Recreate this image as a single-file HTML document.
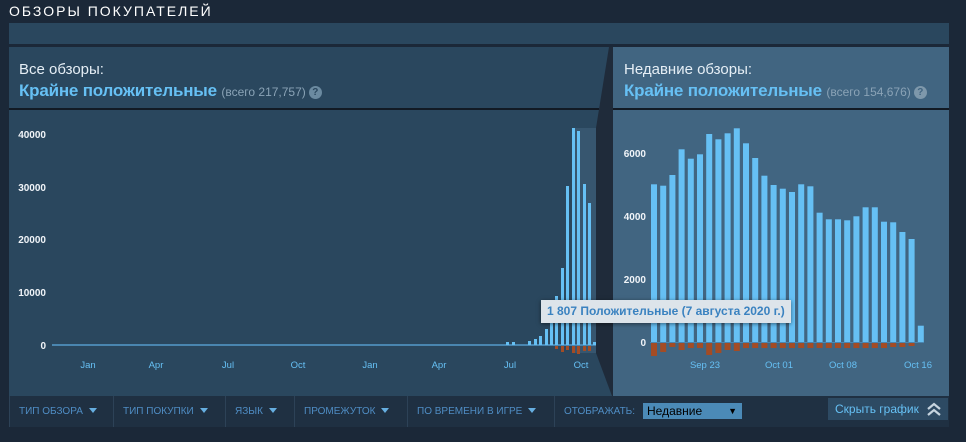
<!DOCTYPE html>
<html><head><meta charset="utf-8"><style>
*{margin:0;padding:0;box-sizing:border-box}
body{width:966px;height:442px;background:#1b2838;font-family:"Liberation Sans",Arial,sans-serif;position:relative;overflow:hidden}
.abs{position:absolute}
.title{left:9px;top:3px;color:#fff;font-size:14px;letter-spacing:2px}
.strip{left:9px;top:23px;width:940px;height:21px;background:#2a475e}
.lp{left:9px;top:47px;width:603px;height:349px;background:#2a475e}
.rp{left:613px;top:47px;width:336px;height:349px;background:#416581}
.lab{color:#e5eef5;font-size:15px}
.rat{color:#66c0f4;font-size:17px;font-weight:bold;letter-spacing:-0.2px}
.cnt{color:#8aa3b6;font-size:12px;font-weight:normal;letter-spacing:0}
.q{display:inline-block;width:13px;height:13px;border-radius:50%;background:#6b8aa0;color:#2a475e;font-size:10px;font-weight:bold;text-align:center;line-height:13px;vertical-align:1px;margin-left:3px;letter-spacing:0}
.sep{height:2px;background:#121a24}
.bar{left:9px;top:396px;width:940px;height:31px;background:#1f3042}
.f{position:absolute;top:0;height:31px;line-height:31px;color:#4f8dc4;font-size:10px;border-left:1px solid #2d4257;padding-left:9px}
.tri{display:inline-block;width:0;height:0;border-left:4px solid transparent;border-right:4px solid transparent;border-top:5px solid #66aee0;margin-left:6px;vertical-align:1px}
</style></head><body>
<div class="abs title">ОБЗОРЫ ПОКУПАТЕЛЕЙ</div>
<div class="abs strip"></div>
<div class="abs lp"></div>
<div class="abs rp"></div>
<div class="abs sep" style="left:9px;top:108px;width:590px"></div>
<div class="abs sep" style="left:613px;top:108px;width:336px"></div>
<div class="abs lab" style="left:19px;top:61px">Все обзоры:</div>
<div class="abs rat" style="left:19px;top:81px">Крайне положительные <span class="cnt">(всего 217,757)</span><span class="q">?</span></div>
<div class="abs lab" style="left:624px;top:61px">Недавние обзоры:</div>
<div class="abs rat" style="left:624px;top:81px">Крайне положительные <span class="cnt">(всего 154,676)</span><span class="q" style="background:#7e98ab;color:#416581">?</span></div>
<svg class="abs" style="left:0;top:0" width="966" height="442">
<rect x="575" y="128" width="21" height="225" fill="#37566f"/>
<polygon points="609,47 613,47 613,396 612,396 596,353 596,128" fill="#1f2b3a"/>
<g font-size="10" font-weight="bold" fill="#f0f4f8" text-anchor="end">
<text x="46" y="138">40000</text><text x="46" y="191">30000</text><text x="46" y="243">20000</text><text x="46" y="296">10000</text><text x="46" y="349">0</text>
<text x="646" y="157">6000</text><text x="646" y="220">4000</text><text x="646" y="283">2000</text><text x="646" y="346">0</text>
</g>
<line x1="52" y1="345" x2="596" y2="345" stroke="#4a86b0" stroke-width="2"/>
<g fill="#66c0f4">
<rect x="506" y="342" width="3" height="3"/><rect x="512" y="342" width="3" height="3"/><rect x="528" y="341" width="3" height="4"/><rect x="534" y="339" width="3" height="6"/>
<rect x="539" y="336" width="3" height="9"/><rect x="545" y="329" width="3" height="16"/><rect x="550" y="323" width="3" height="22"/><rect x="555" y="296" width="3" height="49"/><rect x="561" y="268" width="3" height="77"/><rect x="566" y="186" width="3" height="159"/><rect x="572" y="128" width="3" height="217"/><rect x="577" y="131" width="3" height="214"/><rect x="583" y="184" width="3" height="161"/><rect x="588" y="203" width="3" height="142"/><rect x="593" y="342" width="3" height="3"/>
</g>
<g fill="#a34c25"><rect x="555" y="346" width="3" height="3"/><rect x="561" y="346" width="3" height="6"/><rect x="566" y="346" width="3" height="4"/><rect x="572" y="346" width="3" height="7"/><rect x="577" y="346" width="3" height="8"/><rect x="583" y="346" width="3" height="5"/><rect x="588" y="346" width="3" height="5"/></g>
<g font-size="9.5" fill="#66c0f4" text-anchor="middle">
<text x="88" y="368">Jan</text><text x="156" y="368">Apr</text><text x="228" y="368">Jul</text><text x="298" y="368">Oct</text><text x="370" y="368">Jan</text><text x="439" y="368">Apr</text><text x="510" y="368">Jul</text><text x="581" y="368">Oct</text>
<text x="705" y="368">Sep 23</text><text x="779" y="368">Oct 01</text><text x="843" y="368">Oct 08</text><text x="918" y="368">Oct 16</text>
</g>
<line x1="650" y1="342.5" x2="924" y2="342.5" stroke="#4a86b0" stroke-width="1"/>
<g id="rb"></g>
</svg>
<div class="abs" style="left:541px;top:300px;width:250px;height:23px;background:#dde4ea;box-shadow:0 1px 4px rgba(0,0,0,.5);color:#3a82c0;font-size:12px;font-weight:bold;line-height:23px;padding-left:6px">1 807 Положительные (7 августа 2020 г.)</div>
<div class="abs bar">
<div class="f" style="left:0;width:104px">ТИП ОБЗОРА<span class="tri"></span></div>
<div class="f" style="left:104px;width:112px">ТИП ПОКУПКИ<span class="tri"></span></div>
<div class="f" style="left:216px;width:69px">ЯЗЫК<span class="tri"></span></div>
<div class="f" style="left:285px;width:113px">ПРОМЕЖУТОК<span class="tri"></span></div>
<div class="f" style="left:398px;width:147px">ПО ВРЕМЕНИ В ИГРЕ<span class="tri"></span></div>
<div class="f" style="left:545px;width:270px">ОТОБРАЖАТЬ:</div>
<div class="abs" style="left:634px;top:7px;width:99px;height:16px;background:#4b8ab7;color:#000;font-size:12px;line-height:16px;padding-left:4px">Недавние<span style="position:absolute;right:5px;font-size:9px">▼</span></div>
</div>
<div class="abs" style="left:828px;top:398px;width:120px;height:22px;background:#2d4a63;color:#66c0f4;font-size:12px;line-height:22px;padding-left:7px">Скрыть график
<svg class="abs" style="left:98px;top:4px" width="16" height="14"><path d="M2 7 L8 2 L14 7 M2 13 L8 8 L14 13" fill="none" stroke="#c6d4df" stroke-width="2.2"/></svg></div>
<script>
var h=[157.7,156.3,167,192.7,183.3,187.7,208,202.7,208.7,213.7,198.7,184,166.3,157,153.3,150,157.7,155.7,129.3,122.7,122.7,121.7,125.7,134.7,134.7,120.3,119.7,110,103,16.3];
var n=[13,9,4,7,5,5,12,10,7,8,5,5,5,5,5,5,5,5,5,5,5,5,5,5,5,5,4,4,3,0];
var s='';for(var i=0;i<30;i++){var x=651+i*9.2;s+='<rect x="'+x+'" y="'+(342-h[i])+'" width="6" height="'+h[i]+'" fill="#66c0f4"/>';if(n[i])s+='<rect x="'+x+'" y="343" width="6" height="'+n[i]+'" fill="#a34c25"/>';}
document.getElementById('rb').innerHTML=s;
</script>
</body></html>
